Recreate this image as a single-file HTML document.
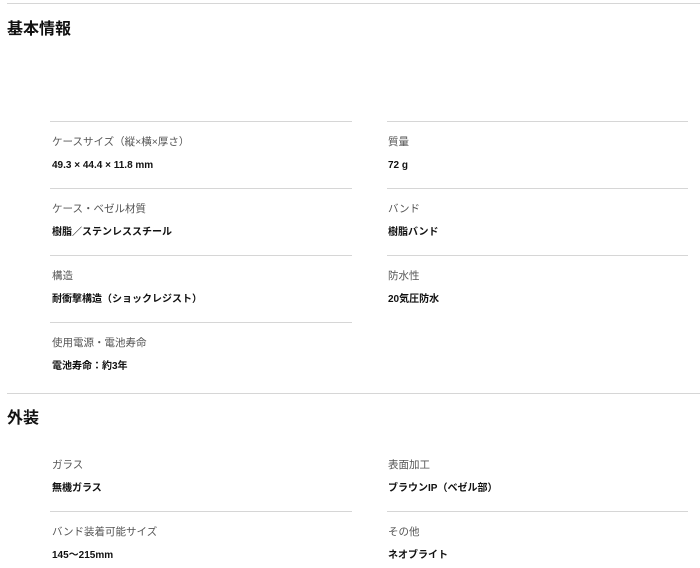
<!DOCTYPE html>
<html><head><meta charset="utf-8"><style>
body{margin:0;width:700px;height:568px;background:#fff;position:relative;overflow:hidden;font-family:"Liberation Sans","Noto Sans CJK JP",sans-serif;}
.l{position:absolute;height:1px;background:#d6d6d6}
.h{position:absolute;left:7px;font-size:16px;font-weight:bold;color:#111;line-height:20px}
.t{position:absolute;font-size:10.5px;color:#555;line-height:14px;white-space:nowrap}
.v{position:absolute;font-size:10px;font-weight:bold;color:#111;line-height:14px;white-space:nowrap}
</style></head><body>
<div class="l" style="left:7px;width:693px;top:3px"></div>
<div class="h" style="top:20px">基本情報</div>
<div class="l" style="left:50px;width:302px;top:121px"></div>
<div class="l" style="left:387px;width:301px;top:121px"></div>
<div class="t" style="left:52px;top:135px">ケースサイズ（縦×横×厚さ）</div>
<div class="v" style="left:52px;top:159px">49.3 × 44.4 × 11.8 mm</div>
<div class="t" style="left:388px;top:135px">質量</div>
<div class="v" style="left:388px;top:159px">72 g</div>
<div class="l" style="left:50px;width:302px;top:188px"></div>
<div class="l" style="left:387px;width:301px;top:188px"></div>
<div class="t" style="left:52px;top:202px">ケース・ベゼル材質</div>
<div class="v" style="left:52px;top:226px">樹脂／ステンレススチール</div>
<div class="t" style="left:388px;top:202px">バンド</div>
<div class="v" style="left:388px;top:226px">樹脂バンド</div>
<div class="l" style="left:50px;width:302px;top:255px"></div>
<div class="l" style="left:387px;width:301px;top:255px"></div>
<div class="t" style="left:52px;top:269px">構造</div>
<div class="v" style="left:52px;top:293px">耐衝撃構造（ショックレジスト）</div>
<div class="t" style="left:388px;top:269px">防水性</div>
<div class="v" style="left:388px;top:293px">20気圧防水</div>
<div class="l" style="left:50px;width:302px;top:322px"></div>
<div class="t" style="left:52px;top:336px">使用電源・電池寿命</div>
<div class="v" style="left:52px;top:360px">電池寿命：約3年</div>
<div class="l" style="left:7px;width:693px;top:393px"></div>
<div class="h" style="top:409px">外装</div>
<div class="t" style="left:52px;top:458px">ガラス</div>
<div class="v" style="left:52px;top:482px">無機ガラス</div>
<div class="t" style="left:388px;top:458px">表面加工</div>
<div class="v" style="left:388px;top:482px">ブラウンIP（ベゼル部）</div>
<div class="l" style="left:50px;width:302px;top:511px"></div>
<div class="l" style="left:387px;width:301px;top:511px"></div>
<div class="t" style="left:52px;top:525px">バンド装着可能サイズ</div>
<div class="v" style="left:52px;top:549px">145〜215mm</div>
<div class="t" style="left:388px;top:525px">その他</div>
<div class="v" style="left:388px;top:549px">ネオブライト</div>
</body></html>
